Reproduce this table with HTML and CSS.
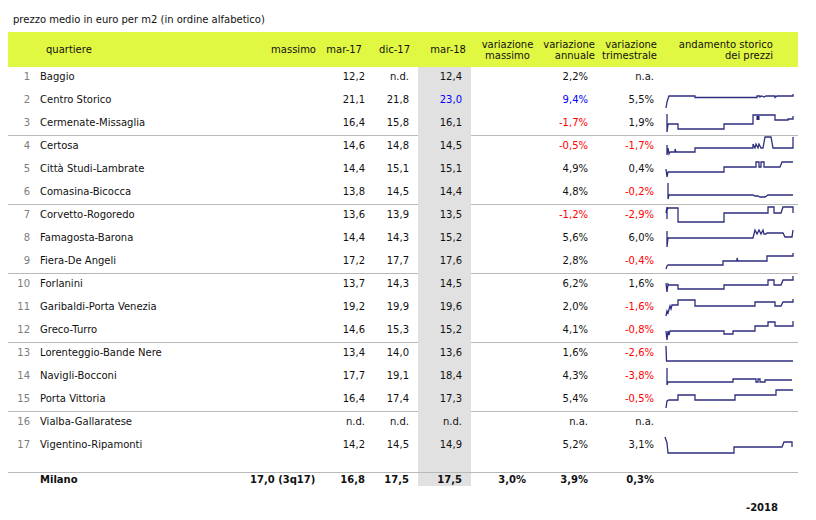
FILE: index.html
```html
<!DOCTYPE html>
<html lang="it">
<head>
<meta charset="utf-8">
<title>prezzo medio in euro per m2</title>
<link rel="stylesheet" href="styles.css">
</head>
<body>
<div class="page">
  <div class="title">prezzo medio in euro per m2 (in ordine alfabetico)</div>
  <div class="table">
    <div class="head">
      <div></div>
      <div>quartiere</div>
      <div>massimo</div>
      <div>mar-17</div>
      <div>dic-17</div>
      <div>mar-18</div>
      <div>variazione<br>massimo</div>
      <div>variazione<br>annuale</div>
      <div>variazione<br>trimestrale</div>
      <div>andamento storico<br>dei prezzi</div>
    </div>

    <div class="row"><div>1</div><div>Baggio</div><div></div><div>12,2</div><div>n.d.</div><div>12,4</div><div></div><div>2,2%</div><div>n.a.</div><div></div></div>
    <div class="row"><div>2</div><div>Centro Storico</div><div></div><div>21,1</div><div>21,8</div><div class="up">23,0</div><div></div><div class="up">9,4%</div><div>5,5%</div><div><svg viewBox="0 0 128 23" width="128" height="23"><path d="M1,18 L2,12 L4,6 L30,6 L30,7.5 L92,7.5 L92,6 L95,6 L95,7 L97,6 L99,7 L101,6 L103,6 L110,6 L110,7.5 L112,6 L128,6 L128,4"/></svg></div></div>
    <div class="row end"><div>3</div><div>Cermenate-Missaglia</div><div></div><div>16,4</div><div>15,8</div><div>16,1</div><div></div><div class="down">-1,7%</div><div>1,9%</div><div><svg viewBox="0 0 128 23" width="128" height="23"><path d="M2,1 L2,19 L3,11 L13,11 L13,16 L59,16 L59,11 L88,11 L88,2 L110,2 L110,7 L123,7 L123,6 L128,6 L128,3"/><rect x="91.5" y="3" width="3" height="4"/></svg></div></div>

    <div class="row"><div>4</div><div>Certosa</div><div></div><div>14,6</div><div>14,8</div><div>14,5</div><div></div><div class="down">-0,5%</div><div class="down">-1,7%</div><div><svg viewBox="0 0 128 23" width="128" height="23"><path d="M2,9 L2,19 L3,12 L4,18 L5,16 L10,16 L10,13 L11,16 L30,16 L30,12 L88,12 L88,8 L90,12 L91,8 L93,12 L94,8 L96,12 L98,12 L100,1 L106,1 L108,12 L128,12 L128,1"/></svg></div></div>
    <div class="row"><div>5</div><div>Città Studi-Lambrate</div><div></div><div>14,4</div><div>15,1</div><div>15,1</div><div></div><div>4,9%</div><div>0,4%</div><div><svg viewBox="0 0 128 23" width="128" height="23"><path d="M1,10 L2,18 L3,13 L59,13 L59,8 L91,8 L91,3 L94,3 L94,8 L96,8 L96,3 L99,3 L99,8 L115,8 L117,3 L128,3"/></svg></div></div>
    <div class="row end"><div>6</div><div>Comasina-Bicocca</div><div></div><div>13,8</div><div>14,5</div><div>14,4</div><div></div><div>4,8%</div><div class="down">-0,2%</div><div><svg viewBox="0 0 128 23" width="128" height="23"><path d="M3,1 L3,17 L4,13 L88,13 L90,14 L93,14 L95,15 L100,15 L103,13 L128,13"/></svg></div></div>

    <div class="row"><div>7</div><div>Corvetto-Rogoredo</div><div></div><div>13,6</div><div>13,9</div><div>13,5</div><div></div><div class="down">-1,2%</div><div class="down">-2,9%</div><div><svg viewBox="0 0 128 23" width="128" height="23"><path d="M2,14 L2,2 L1,8 L3,3 L13,3 L13,17 L59,17 L59,8 L103,8 L103,2 L109,2 L109,8 L116,8 L118,2 L128,2 L128,8"/></svg></div></div>
    <div class="row"><div>8</div><div>Famagosta-Barona</div><div></div><div>14,4</div><div>14,3</div><div>15,2</div><div></div><div>5,6%</div><div>6,0%</div><div><svg viewBox="0 0 128 23" width="128" height="23"><path d="M2,3 L2,19 L3,10 L88,10 L90,2 L92,6 L94,2 L96,6 L98,2 L99,6 L101,6 L102,5 L118,5 L120,9 L127,9 L128,2"/></svg></div></div>
    <div class="row end"><div>9</div><div>Fiera-De Angeli</div><div></div><div>17,2</div><div>17,7</div><div>17,6</div><div></div><div>2,8%</div><div class="down">-0,4%</div><div><svg viewBox="0 0 128 23" width="128" height="23"><path d="M1,18 L2,15 L3,14 L58,14 L58,10 L72,10 L72,7 L73,10 L102,10 L102,5 L128,5 L128,2"/></svg></div></div>

    <div class="row"><div>10</div><div>Forlanini</div><div></div><div>13,7</div><div>14,3</div><div>14,5</div><div></div><div>6,2%</div><div>1,6%</div><div><svg viewBox="0 0 128 23" width="128" height="23"><path d="M1,9 L2,18 L3,10 L4,11 L13,11 L13,15 L59,15 L59,11 L103,11 L103,6 L109,6 L109,11 L116,11 L118,6 L128,6 L128,2"/></svg></div></div>
    <div class="row"><div>11</div><div>Garibaldi-Porta Venezia</div><div></div><div>19,2</div><div>19,9</div><div>19,6</div><div></div><div>2,0%</div><div class="down">-1,6%</div><div><svg viewBox="0 0 128 23" width="128" height="23"><path d="M1,19 L2,14 L3,16 L5,9 L6,12 L7,8 L13,8 L13,3 L30,3 L30,9 L90,9 L90,5 L110,5 L110,9 L116,9 L118,5 L128,5 L128,2"/></svg></div></div>
    <div class="row end"><div>12</div><div>Greco-Turro</div><div></div><div>14,6</div><div>15,3</div><div>15,2</div><div></div><div>4,1%</div><div class="down">-0,8%</div><div><svg viewBox="0 0 128 23" width="128" height="23"><path d="M1,11 L2,20 L3,11 L4,15 L5,11 L59,11 L59,14 L68,14 L68,11 L90,11 L90,6 L103,6 L103,2 L110,2 L110,6 L128,6 L128,1"/></svg></div></div>

    <div class="row"><div>13</div><div>Lorenteggio-Bande Nere</div><div></div><div>13,4</div><div>14,0</div><div>13,6</div><div></div><div>1,6%</div><div class="down">-2,6%</div><div><svg viewBox="0 0 128 23" width="128" height="23"><path d="M1,3 L1.5,18 L128,18"/></svg></div></div>
    <div class="row"><div>14</div><div>Navigli-Bocconi</div><div></div><div>17,7</div><div>19,1</div><div>18,4</div><div></div><div>4,3%</div><div class="down">-3,8%</div><div><svg viewBox="0 0 128 23" width="128" height="23"><path d="M2,2 L2,19 L3,16 L68,16 L68,13 L91,13 L91,16 L93,16 L93,13 L95,13 L95,16 L100,16 L100,14 L127,14"/></svg></div></div>
    <div class="row end"><div>15</div><div>Porta Vittoria</div><div></div><div>16,4</div><div>17,4</div><div>17,3</div><div></div><div>5,4%</div><div class="down">-0,5%</div><div><svg viewBox="0 0 128 23" width="128" height="23"><path d="M1,19 L2,12 L4,11 L13,11 L13,6 L30,6 L30,11 L70,11 L70,6 L111,6 L111,1 L128,1"/></svg></div></div>

    <div class="row"><div>16</div><div>Vialba-Gallaratese</div><div></div><div>n.d.</div><div>n.d.</div><div>n.d.</div><div></div><div>n.a.</div><div>n.a.</div><div></div></div>
    <div class="row"><div>17</div><div>Vigentino-Ripamonti</div><div></div><div>14,2</div><div>14,5</div><div>14,9</div><div></div><div>5,2%</div><div>3,1%</div><div><svg viewBox="0 0 128 23" width="128" height="23"><path d="M0,2 L2,8 L3,18 L69,18 L69,12 L117,12 L119,7 L127,7 L127,12"/></svg></div></div>

    <div class="spacer"><div></div></div>

    <div class="row total"><div></div><div>Milano</div><div>17,0 (3q17)</div><div>16,8</div><div>17,5</div><div>17,5</div><div>3,0%</div><div>3,9%</div><div>0,3%</div><div></div></div>
  </div>
  <div class="footer">-2018</div>
</div>
</body>
</html>
```
FILE: styles.css
```css
html, body {
  margin: 0;
  padding: 0;
  background: #ffffff;
}

body {
  padding: 8px;
  font-family: "DejaVu Sans", Verdana, sans-serif;
  font-size: 10px;
  line-height: 12px;
  color: #111111;
}

.page {
  width: 790px;
}

.title {
  padding: 6px 0 0 5px;
  height: 12px;
  margin-bottom: 6px;
}

.table {
  display: flex;
  flex-direction: column;
}

.head,
.row,
.spacer {
  display: grid;
  grid-template-columns: 26px 216px 70px 48px 50px 53px 69px 60px 62px 136px;
}

/* header */
.head {
  height: 35px;
  background: #e1f842;
  line-height: 11px;
}

.head > div {
  display: flex;
  align-items: center;
  justify-content: flex-end;
  text-align: right;
}

.head > :nth-child(2) { justify-content: flex-start; padding-left: 12px; }
.head > :nth-child(3) { padding-right: 4px; }
.head > :nth-child(4) { padding-right: 6px; }
.head > :nth-child(5) { padding-right: 8px; }
.head > :nth-child(6) { padding-right: 5px; }
.head > :nth-child(7) { justify-content: center; text-align: center; padding-left: 4px; }
.head > :nth-child(8) { padding-right: 5px; }
.head > :nth-child(9) { padding-right: 5px; }
.head > :nth-child(10) { padding-right: 25px; }

/* body rows */
.row {
  height: 23px;
  box-sizing: border-box;
}

.row.end {
  border-bottom: 1px solid #b9b9b9;
}

.row > div {
  padding-top: 4px;
  text-align: right;
  white-space: nowrap;
}

.row > :nth-child(1) { padding-right: 4px; color: #7d7d7d; }
.row > :nth-child(2) { text-align: left; padding-left: 6px; }
.row > :nth-child(3) { padding-right: 5px; }
.row > :nth-child(4) { padding-right: 3px; }
.row > :nth-child(5) { padding-right: 9px; }
.row > :nth-child(6) { padding-right: 9px; background: #e1e1e1; }
.row > :nth-child(7) { padding-right: 14px; }
.row > :nth-child(8) { padding-right: 12px; }
.row > :nth-child(9) { padding-right: 8px; }
.row > :nth-child(10) { text-align: left; padding: 0 0 0 3px; }

.row svg {
  display: block;
  overflow: visible;
}

.row svg path {
  fill: none;
  stroke: #2e2e7e;
  stroke-width: 1.3;
  stroke-linejoin: miter;
}

.row svg rect {
  fill: #23236e;
}

.up { color: #0000ff; }
.down { color: #ff0000; }

.spacer {
  height: 14px;
}

.spacer > div {
  grid-column: 6;
  background: #e1e1e1;
}

.row.total {
  height: 14px;
  border-top: 1px solid #b9b9b9;
  font-weight: bold;
}

.row.total > div {
  padding-top: 1px;
}

.footer {
  margin-top: 16px;
  padding-right: 20px;
  text-align: right;
  font-weight: bold;
}
```
